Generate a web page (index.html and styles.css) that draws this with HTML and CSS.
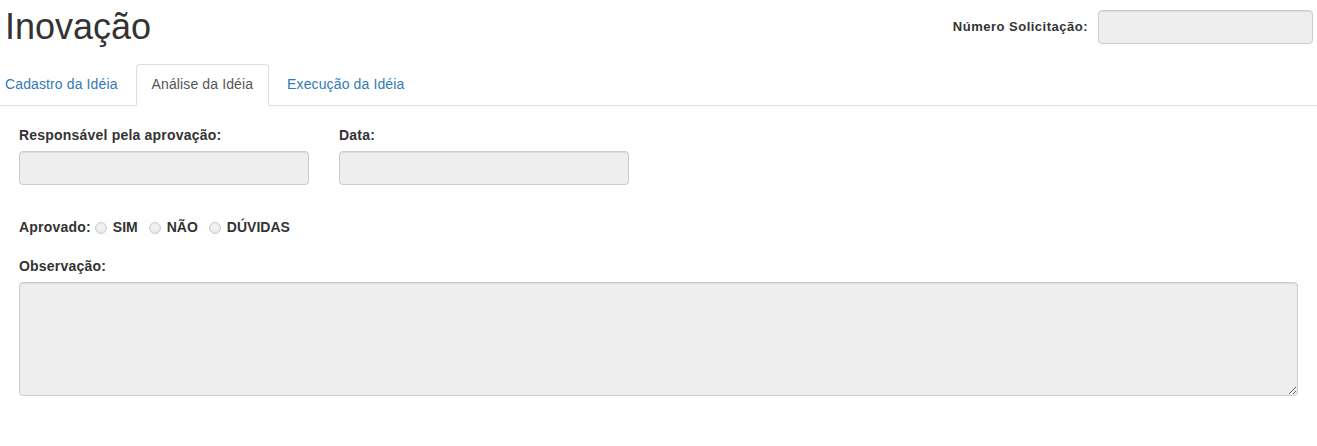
FILE: index.html
```html
<!DOCTYPE html>
<html lang="pt-BR">
<head>
    <meta charset="UTF-8">
    <title>Inovação</title>
    <link rel="stylesheet" href="styles.css">
</head>
<body>
    <div class="topo">
        <h1>Inovação</h1>
        <div class="numero">
            <label for="numero">Número Solicitação:</label>
            <input id="numero" class="campo" type="text" disabled>
        </div>
    </div>

    <ul class="abas">
        <li><a href="#">Cadastro da Idéia</a></li>
        <li class="ativa"><a href="#">Análise da Idéia</a></li>
        <li><a href="#">Execução da Idéia</a></li>
    </ul>

    <form class="analise">
        <div class="linha">
            <div class="grupo">
                <label for="responsavel">Responsável pela aprovação:</label>
                <input id="responsavel" class="campo" type="text" disabled>
            </div>
            <div class="grupo">
                <label for="data">Data:</label>
                <input id="data" class="campo" type="text" disabled>
            </div>
        </div>

        <div class="aprovado">
            <label>Aprovado:</label>
            <label class="opcao"><input type="radio" name="aprovado" disabled> SIM</label>
            <label class="opcao"><input type="radio" name="aprovado" disabled> NÃO</label>
            <label class="opcao"><input type="radio" name="aprovado" disabled> DÚVIDAS</label>
        </div>

        <div class="grupo">
            <label for="obs">Observação:</label>
            <textarea id="obs" class="campo" disabled></textarea>
        </div>
    </form>
</body>
</html>
```

FILE: styles.css
```css
* {
    margin: 0;
    padding: 0;
    box-sizing: border-box;
    list-style: none;
}
body {
    font-family: "Liberation Sans", Arial, sans-serif;
    font-size: 14px;
    line-height: 1.42857;
    color: #333;
    background: #fff;
}
label {
    font-weight: bold;
    letter-spacing: .2px;
}
.campo {
    display: block;
    height: 34px;
    border: 1px solid #ccc;
    border-radius: 4px;
    background-color: #eee;
    box-shadow: inset 0 1px 1px rgba(0,0,0,.075);
    font: inherit;
}

/* cabeçalho */
.topo {
    display: flex;
    justify-content: space-between;
    align-items: flex-start;
    padding: 0 4px 0 5px;
}
.topo h1 {
    font-size: 36px;
    font-weight: 500;
    line-height: 1.1;
    margin-top: 7px;
}
.numero {
    display: flex;
    align-items: center;
    gap: 10px;
    margin-top: 10px;
}
.numero label {
    font-size: 13px;
    letter-spacing: .5px;
}
.numero .campo {
    width: 215px;
}

/* abas */
.abas {
    display: flex;
    margin-top: 17px;
    padding-left: 0;
    margin-left: -11px;
    border-bottom: 1px solid #ddd;
}
.abas li {
    margin-right: 2px;
    margin-bottom: -1px;
}
.abas a {
    display: block;
    padding: 10px 15px;
    border: 1px solid transparent;
    border-radius: 4px 4px 0 0;
    color: #337ab7;
    text-decoration: none;
    letter-spacing: .12px;
}
.abas .ativa a {
    color: #555;
    background: #fff;
    border-color: #ddd #ddd transparent;
}

/* formulário */
.analise {
    padding: 20px 19px;
}
.linha {
    display: flex;
    gap: 30px;
}
.grupo label {
    display: block;
    margin-bottom: 5px;
}
.linha .campo {
    width: 290px;
}
.aprovado {
    display: flex;
    align-items: center;
    margin: 33px 0 19px;
    height: 20px;
}
.aprovado .opcao {
    display: flex;
    align-items: center;
    gap: 6px;
    margin-left: 4px;
    margin-right: 7px;
    letter-spacing: 0;
}
.aprovado input {
    appearance: none;
    width: 12px;
    height: 12px;
    border-radius: 50%;
    border: 1px solid #cdcdcd;
    background: radial-gradient(circle at 50% 40%, #f6f6f6, #e2e2e2);
}
textarea.campo {
    width: 100%;
    height: 114px;
    resize: vertical;
}
```
